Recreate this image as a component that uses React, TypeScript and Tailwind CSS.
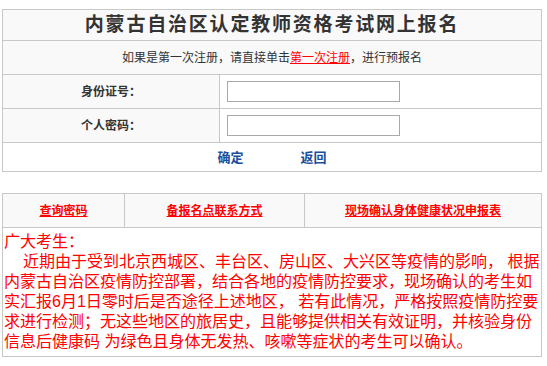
const FONT = "font-['Liberation_Sans','Noto_Sans_CJK_SC',sans-serif]";

const NOTICE = [
  "近期由于受到北京西城区、丰台区、房山区、大兴区等疫情的影响， 根据",
  "内蒙古自治区疫情防控部署，结合各地的疫情防控要求，现场确认的考生如",
  "实汇报6月1日零时后是否途径上述地区， 若有此情况，严格按照疫情防控要",
  "求进行检测；无这些地区的旅居史，且能够提供相关有效证明，并核验身份",
  "信息后健康码 为绿色且身体无发热、咳嗽等症状的考生可以确认。",
];

function FieldRow({ label, type }: { label: string; type: string }) {
  return (
    <div className="flex h-[34px] border-t border-[#c8c8c8]">
      <div className="flex w-[216px] items-center justify-center bg-[#f9f9f9] text-[12px] font-bold text-[#333]">
        {label}
      </div>
      <div className="flex flex-1 items-center border-l border-[#c8c8c8] bg-white pl-[7px]">
        <input
          type={type}
          className="h-[21px] w-[173px] border border-[#a9a9a9] bg-white outline-none"
        />
      </div>
    </div>
  );
}

export default function App() {
  return (
    <div className={`min-h-[366px] bg-white pl-[2px] pt-[9px] ${FONT}`}>
      {/* login table */}
      <div className="w-[540px] border border-[#c8c8c8]">
        <div className="flex h-[30px] items-center justify-center bg-[#f9f9f9] text-[19px] font-bold tracking-[1.8px] text-[#333]">
          内蒙古自治区认定教师资格考试网上报名
        </div>
        <div className="flex h-[34px] items-center justify-center border-t border-[#c8c8c8] bg-[#f9f9f9] text-[12px] text-[#333]">
          如果是第一次注册，请直接单击
          <a href="#" className="text-[#ff0000] underline">
            第一次注册
          </a>
          ，进行预报名
        </div>
        <FieldRow label="身份证号：" type="text" />
        <FieldRow label="个人密码：" type="password" />
        <div className="flex h-[29px] items-center justify-center gap-[57px] border-t border-[#c8c8c8] bg-white pt-[2px] text-[13px] font-bold text-[#1b4f9c]">
          <button>确定</button>
          <button>返回</button>
        </div>
      </div>

      {/* notice table */}
      <div className="mt-[21px] w-[540px] border border-[#c8c8c8]">
        <div className="flex h-[33px] bg-[#f9f9f9] text-[12px] font-bold">
          <div className="flex w-[121px] items-center justify-center">
            <a href="#" className="text-[#ff0000] underline">查询密码</a>
          </div>
          <div className="flex w-[180px] items-center justify-center border-l border-[#c8c8c8]">
            <a href="#" className="text-[#ff0000] underline">备报名点联系方式</a>
          </div>
          <div className="flex flex-1 items-center justify-center border-l border-[#c8c8c8]">
            <a href="#" className="text-[#ff0000] underline">现场确认身体健康状况申报表</a>
          </div>
        </div>
        <div className="border-t border-[#c8c8c8] bg-white pb-[4px] pl-[1px] pt-[4px] text-[16px] leading-[20px] text-[#ff0000]">
          <div className="whitespace-nowrap">广大考生：</div>
          {NOTICE.map((line, i) => (
            <div key={i} className={`whitespace-nowrap ${i === 0 ? "pl-[19px]" : ""}`}>
              {line}
            </div>
          ))}
        </div>
      </div>
    </div>
  );
}
